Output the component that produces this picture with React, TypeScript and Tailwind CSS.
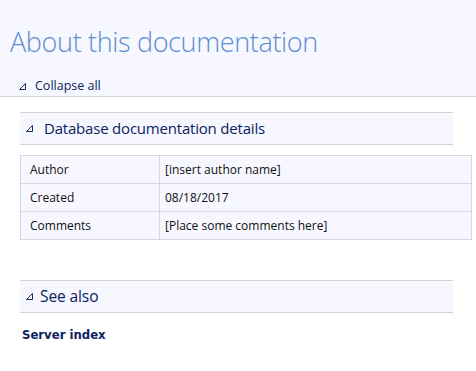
import React from "react";

const Tri = ({ className = "" }: { className?: string }) => (
  <svg width="7" height="7" viewBox="0 0 7 7" className={className}>
    <path d="M6.5 0.5 L6.5 6.5 L0.5 6.5 Z" fill="none" stroke="#1a2a5a" strokeWidth="1" />
  </svg>
);

export default function App() {
  const rows: [string, string][] = [
    ["Author", "[insert author name]"],
    ["Created", "08/18/2017"],
    ["Comments", "[Place some comments here]"],
  ];
  return (
    <div className="w-[476px] h-[371px] bg-white overflow-hidden" style={{ fontFamily: '"Open Sans", "Noto Sans", sans-serif' }}>
      <div className="bg-[#f7f7ff] border-b border-[#d3d3d3] h-[97px] flex flex-col">
        <h1 className="pl-[10px] pt-[24px] text-[27px] leading-[36px] font-light text-[#5b8fd0] tracking-[-0.35px]">
          About this documentation
        </h1>
        <div className="flex items-center pl-[19px] mt-[17px] text-[12.5px] text-[#0a2260]">
          <Tri />
          <span className="ml-[9px]">Collapse all</span>
        </div>
      </div>

      <div className="ml-[20px] mt-[15px] w-[433px] h-[33px] bg-[#f7f7ff] border-y border-[#d3d3d3] flex items-center">
        <Tri className="ml-[6px]" />
        <span className="ml-[11px] text-[15px] tracking-[-0.2px] text-[#0a2260]">Database documentation details</span>
      </div>

      <table className="ml-[20px] mt-[10px] w-[452px] border-collapse bg-[#f7f7ff] text-[12px] text-[#111]">
        <tbody>
          {rows.map(([k, v]) => (
            <tr key={k} className="h-[28px]">
              <td className="border border-[#d8d8e0] w-[139px] pl-[9px]">{k}</td>
              <td className="border border-[#d8d8e0] pl-[5px]">{v}</td>
            </tr>
          ))}
        </tbody>
      </table>

      <div className="ml-[20px] mt-[40px] w-[433px] h-[33px] bg-[#f7f7ff] border-y border-[#d3d3d3] flex items-center">
        <Tri className="ml-[6px]" />
        <span className="ml-[7px] text-[15.5px] tracking-[-0.1px] text-[#0a2260]">See also</span>
      </div>

      <div className="ml-[22px] mt-[14px] text-[11.7px] font-bold text-[#0a2260]" style={{ fontFamily: '"DejaVu Sans", Verdana, sans-serif' }}>
        Server index
      </div>
    </div>
  );
}
